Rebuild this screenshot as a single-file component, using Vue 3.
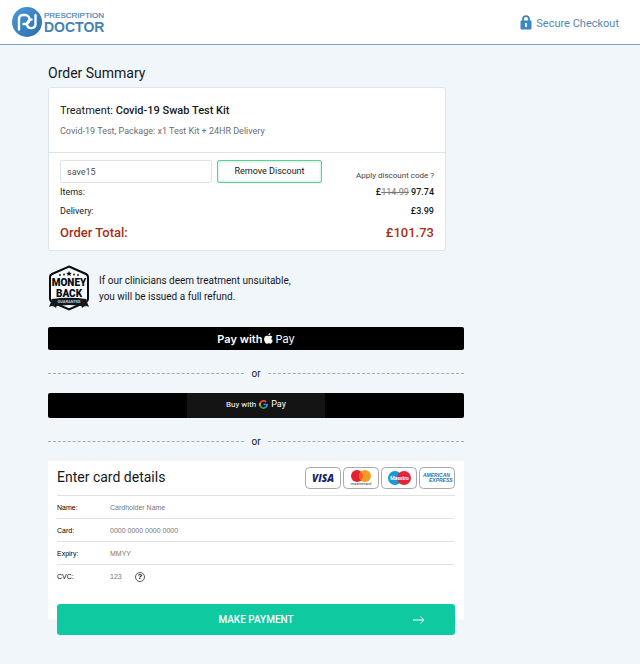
<script setup>
import { ref } from 'vue';

const discountCode = ref('save15');
const applied = ref(true);

const fields = ref([
  { id: 'name', label: 'Name:', placeholder: 'Cardholder Name', value: '' },
  { id: 'card', label: 'Card:', placeholder: '0000 0000 0000 0000', value: '' },
  { id: 'expiry', label: 'Expiry:', placeholder: 'MMYY', value: '' },
  { id: 'cvc', label: 'CVC:', placeholder: '123', value: '' },
]);

const toggleDiscount = () => {
  applied.value = !applied.value;
};
</script>

<template>
  <div class="page">
    <header class="topbar">
      <a href="#" class="logo" aria-label="Prescription Doctor">
        <svg width="94" height="32" viewBox="0 0 94 32">
          <defs>
            <linearGradient id="disc" x1="0" y1="0" x2="1" y2="1">
              <stop offset="0" stop-color="#4a9bd8" />
              <stop offset="1" stop-color="#2c6cab" />
            </linearGradient>
          </defs>
          <circle cx="15" cy="16" r="15" fill="url(#disc)" />
          <path d="M7 23.500V13q0-4 4-4h2a4.500 4.500 0 0 1 0 9H11.500M19.500 13.500a4.800 4.800 0 0 0-4.500 5 4.300 4.300 0 0 0 8.500 0V9" fill="none" stroke="#fff" stroke-width="2.400" stroke-linecap="round" />
          <text x="32" y="12" class="logo-small">PRESCRIPTION</text>
          <text x="32" y="26" class="logo-big">DOCTOR</text>
        </svg>
      </a>
      <div class="secure">
        <svg width="12" height="15" viewBox="0 0 12 15">
          <path d="M3 7V4.200a3 3 0 0 1 6 0V7" fill="none" stroke="#3f84bd" stroke-width="1.800" />
          <rect x="0.500" y="5.500" width="11" height="9" rx="1" fill="#3c86c8" />
          <path d="M6 8v4" stroke="#fff" stroke-width="1.800" />
        </svg>
        <span>Secure Checkout</span>
      </div>
    </header>

    <main class="checkout">
      <h1>Order Summary</h1>

      <section class="summary">
        <div class="product">
          <h2>Treatment: <b>Covid-19 Swab Test Kit</b></h2>
          <p>Covid-19 Test, Package: x1 Test Kit + 24HR Delivery</p>
        </div>
        <div class="totals">
          <div class="discount">
            <input v-model="discountCode" type="text" aria-label="Discount code">
            <button type="button" @click="toggleDiscount">{{ applied ? 'Remove' : 'Apply' }} Discount</button>
            <span>Apply discount code ?</span>
          </div>
          <div class="line"><span>Items:</span><b>£<s>114.99</s> 97.74</b></div>
          <div class="line"><span>Delivery:</span><b>£3.99</b></div>
          <div class="line grand"><span>Order Total:</span><b>£101.73</b></div>
        </div>
      </section>

      <div class="guarantee">
        <svg width="42" height="46" viewBox="0 0 42 46">
          <path d="M21 1.500 38 9q2 1 2 3v22q0 2-2 3L21 44.500 4 37q-2-1-2-3V12q0-2 2-3Z" fill="#f7fafc" stroke="#080b0f" stroke-width="2" />
          <path d="m21 6 .8 1.700 1.900.2-1.400 1.300.4 1.900-1.700-1-1.700 1 .4-1.900-1.400-1.300 1.900-.2Z" fill="#080b0f" />
          <g fill="#080b0f">
            <circle cx="12" cy="10" r="0.900" /><circle cx="16" cy="9.500" r="0.900" />
            <circle cx="26" cy="9.500" r="0.900" /><circle cx="30" cy="10" r="0.900" />
          </g>
          <text x="21" y="21" class="badge-word">MONEY</text>
          <text x="21" y="32" class="badge-word">BACK</text>
          <path d="M4 34.500 1 42l4-1.500L8 43l2-6ZM38 34.500 41 42l-4-1.500L34 43l-2-6Z" fill="#14181c" />
          <path d="M3.500 34q17.500-2.500 35 0l-1 7.500q-16.500-3-33 0Z" fill="#14181c" />
          <text x="21" y="38" class="badge-ribbon">GUARANTEE</text>
        </svg>
        <p>If our clinicians deem treatment unsuitable,<br>you will be issued a full refund.</p>
      </div>

      <button type="button" class="wallet apple">
        <b>Pay with</b>
        <svg width="9" height="11" viewBox="0 0 16 20">
          <path d="M11.500 0c.2 2-1.500 4.300-3.700 4.300C7.500 2.200 9.500.2 11.500 0ZM15.200 7c-3 1.900-2.500 5.700.6 7-1 2.800-2.600 5.500-4.500 5.500-1.200 0-1.700-.8-3.100-.8s-2 .8-3.100.8C2.500 19.500 0 15 0 11.200 0 5 4.800 3.800 8 5.700c2.300-1.400 5.500-1 7.200 1.300Z" fill="#fff" />
        </svg>
        <span>Pay</span>
      </button>
      <div class="or"><span>or</span></div>
      <button type="button" class="wallet google">
        <span class="google-inner">
          <span>Buy with</span>
          <svg width="9" height="9" viewBox="0 0 18 18">
            <g fill="none" stroke-width="3.400">
              <path d="M14.300 4A7.200 7.200 0 0 0 2.600 5.700" stroke="#ea4335" />
              <path d="M2.600 5.700a7.200 7.200 0 0 0 0 6.600" stroke="#fbbc05" />
              <path d="M2.600 12.300a7.200 7.200 0 0 0 11.200 2" stroke="#34a853" />
              <path d="M13.800 14.300A7 7 0 0 0 16.200 9H9" stroke="#4285f4" />
            </g>
          </svg>
          <span class="gpay">Pay</span>
        </span>
      </button>
      <div class="or"><span>or</span></div>

      <form class="card" @submit.prevent>
        <div class="card-head">
          <h2>Enter card details</h2>
          <div class="brands">
            <svg width="36" height="22" viewBox="0 0 36 22" role="img" aria-label="Visa">
              <rect x="0.500" y="0.500" width="35" height="21" rx="4" class="brand-frame" />
              <text x="18" y="15" class="visa">VISA</text>
            </svg>
            <svg width="36" height="22" viewBox="0 0 36 22" role="img" aria-label="Mastercard">
              <rect x="0.500" y="0.500" width="35" height="21" rx="4" class="brand-frame" />
              <circle cx="14" cy="9" r="6" fill="#e5202c" />
              <circle cx="22" cy="9" r="6" fill="#f59a22" />
              <path d="M18 4.500a6 6 0 0 1 0 9 6 6 0 0 1 0-9" fill="#f26322" />
              <text x="18" y="18" class="mastercard">mastercard</text>
            </svg>
            <svg width="36" height="22" viewBox="0 0 36 22" role="img" aria-label="Maestro">
              <rect x="0.500" y="0.500" width="35" height="21" rx="4" class="brand-frame" />
              <circle cx="14" cy="11" r="7" fill="#1b9ad3" />
              <circle cx="23" cy="11" r="7" fill="#e52535" />
              <text x="18.500" y="13" class="maestro">Maestro</text>
            </svg>
            <svg width="36" height="22" viewBox="0 0 36 22" role="img" aria-label="American Express">
              <rect x="0.500" y="0.500" width="35" height="21" rx="4" class="brand-frame" />
              <text x="4" y="10" class="amex">AMERICAN</text>
              <text x="10" y="15" class="amex">EXPRESS</text>
            </svg>
          </div>
        </div>

        <div v-for="field in fields" :key="field.id" class="field">
          <label :for="field.id">{{ field.label }}</label>
          <input :id="field.id" v-model="field.value" :class="field.id" type="text" :placeholder="field.placeholder">
          <button v-if="field.id === 'cvc'" type="button" class="help" aria-label="What is CVC">?</button>
        </div>

        <button type="submit" class="submit">
          <span>MAKE PAYMENT</span>
          <svg width="12" height="8" viewBox="0 0 12 8">
            <path d="M0 4h11M7.500.5 11 4 7.500 7.500" fill="none" stroke="#fff" />
          </svg>
        </button>
      </form>
    </main>
  </div>
</template>

<style>
body {
  background: #f1f6fb;
}
</style>

<style scoped>
.page {
  font-family: Roboto, Arial, sans-serif;
  color: #15181b;
  padding-bottom: 40px;
}

h1, h2, p {
  margin: 0;
  font-weight: 400;
}

button, input {
  font-family: inherit;
  color: inherit;
}

b {
  font-weight: 500;
}

.topbar {
  display: flex;
  justify-content: space-between;
  align-items: center;
  height: 44px;
  padding: 0 21px 0 12px;
  background: #fff;
  border-bottom: 1px solid #79a5c4;
}

.logo {
  display: flex;
}

.logo-small, .logo-big {
  font-family: "Liberation Sans", Arial, sans-serif;
  fill: #4682b6;
}

.logo-small {
  font-size: 8px;
  stroke: #4682b6;
  stroke-width: 0.2px;
}

.logo-big {
  font-size: 14px;
  font-weight: 700;
}

.secure {
  display: flex;
  align-items: center;
  gap: 4px;
  font-size: 11px;
  color: #5488b2;
}

.secure span {
  padding-top: 2px;
}

.checkout {
  width: 65%;
  margin-left: 48px;
  padding-top: 19px;
}

h1 {
  font-size: 14px;
  line-height: 18px;
  margin-bottom: 5px;
}

.summary {
  margin-right: 18px;
  background: #fff;
  border: 1px solid #dfe6eb;
  border-radius: 3px;
}

.product {
  padding: 14px 11px;
  border-bottom: 1px solid #dde3e7;
}

.product h2 {
  font-size: 11px;
  line-height: 18px;
}

.product p {
  font-size: 9px;
  line-height: 14px;
  margin-top: 4px;
  color: #6c6f72;
}

.totals {
  padding: 7px 11px 6px;
}

.discount {
  display: flex;
  gap: 5px;
  height: 23px;
}

.discount input {
  flex: 0 1 152px;
  min-width: 0;
  box-sizing: border-box;
  padding: 0 6px;
  border: 1px solid #dfe3e5;
  border-radius: 2px;
  font-size: 9px;
  color: #4b4e51;
}

.discount button {
  flex: 0 0 105px;
  padding: 0 0 2px;
  border: 1px solid #5fcf9a;
  border-radius: 2px;
  background: #fff;
  box-shadow: inset 0 0 3px #9de6bd;
  font-size: 9px;
}

.discount span {
  flex: 1;
  align-self: flex-end;
  text-align: right;
  white-space: nowrap;
  font-size: 8px;
  line-height: 14px;
  color: #3f4347;
}

.line {
  display: flex;
  justify-content: space-between;
  font-size: 9px;
  line-height: 19px;
}

.line s {
  color: #777;
  font-weight: 400;
}

.grand {
  font-size: 13px;
  font-weight: 500;
  line-height: 23px;
  color: #a52f17;
}

.guarantee {
  display: flex;
  align-items: center;
  gap: 9px;
  margin-top: 14px;
  font-size: 10px;
  line-height: 16px;
}

.guarantee p {
  padding-top: 2px;
}

.badge-word {
  font-size: 10px;
  font-weight: 900;
  text-anchor: middle;
  fill: #080b0f;
}

.badge-ribbon {
  font-size: 4px;
  font-weight: 700;
  text-anchor: middle;
  fill: #c6cacd;
}

.wallet {
  display: flex;
  justify-content: center;
  align-items: center;
  width: 100%;
  padding: 0;
  border: 0;
  border-radius: 2px;
  background: #000;
  color: #fff;
}

.apple {
  height: 23px;
  margin-top: 16px;
  gap: 2px;
  font-family: Inter, sans-serif;
  font-size: 11px;
}

.apple b {
  font-weight: 600;
}

.apple svg {
  padding-bottom: 1px;
}

.google {
  height: 25px;
  font-size: 8px;
}

.google-inner {
  display: flex;
  justify-content: center;
  align-items: center;
  gap: 3px;
  box-sizing: border-box;
  width: 33%;
  height: 25px;
  padding-bottom: 3px;
  background: #141414;
}

.gpay {
  font-size: 9px;
}

.or {
  display: flex;
  align-items: center;
  gap: 7px;
  box-sizing: border-box;
  height: 43px;
  padding-top: 4px;
  font-size: 10px;
}

.or span {
  padding-bottom: 1px;
}

.or::before, .or::after {
  content: '';
  flex: 1;
  border-top: 1px dashed #a3abb0;
}

/* the submit button hangs over the bottom edge of the card */
.card {
  display: flow-root;
  background: #fff;
  padding: 0 9px;
}

.card-head {
  display: flex;
  justify-content: space-between;
  align-items: center;
  height: 34px;
  border-bottom: 1px solid #dfe1e2;
}

.card-head h2 {
  font-size: 14px;
  padding-bottom: 2px;
}

.brands {
  display: flex;
  gap: 2px;
}

.brand-frame {
  fill: #fff;
  stroke: #a7a9ac;
}

.visa {
  font-family: "Open Sans", sans-serif;
  font-size: 10px;
  font-weight: 800;
  font-style: italic;
  text-anchor: middle;
  fill: #182568;
}

.mastercard {
  font-size: 4px;
  text-anchor: middle;
  fill: #333;
}

.maestro {
  font-size: 5px;
  font-weight: 700;
  text-anchor: middle;
  fill: #fff;
}

.amex {
  font-family: "Liberation Sans", Arial, sans-serif;
  font-size: 5px;
  font-weight: 700;
  font-style: italic;
  fill: #2478b5;
}

.field {
  display: flex;
  align-items: center;
  box-sizing: border-box;
  height: 23px;
  margin-right: 1px;
  border-bottom: 1px solid #dfe1e2;
  font-family: "Liberation Sans", Arial, sans-serif;
  font-size: 7px;
  color: #000;
}

.field:nth-last-child(2) {
  border-bottom: 0;
}

.field label {
  width: 53px;
}

.field input {
  flex: 1;
  min-width: 0;
  padding: 0;
  border: 0;
  background: none;
  font-size: 7px;
}

.field input::placeholder {
  color: #777;
  opacity: 1;
}

.field .cvc {
  flex: 0 0 25px;
}

.help {
  width: 10px;
  height: 10px;
  padding: 0;
  border: 1px solid #555;
  border-radius: 50%;
  background: #fff;
  font-size: 8px;
  line-height: 8px;
  font-weight: 700;
}

.submit {
  display: grid;
  grid-template-columns: 1fr auto 1fr;
  align-items: center;
  width: 100%;
  height: 31px;
  margin: 16px 0 -16px;
  padding: 0 30px;
  border: 0;
  border-radius: 3px;
  background: #0fc9a1;
  color: #fff;
  font-size: 10px;
  font-weight: 500;
}

.submit span {
  grid-column: 2;
}

.submit svg {
  justify-self: end;
}
</style>
